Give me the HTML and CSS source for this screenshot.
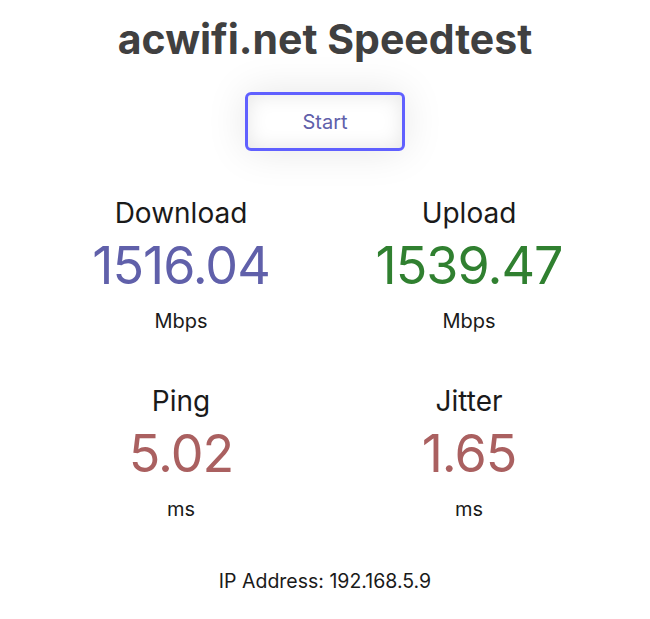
FILE: index.html
```html
<!DOCTYPE html>
<html lang="en">
<head>
    <meta charset="UTF-8">
    <meta name="viewport" content="width=device-width, initial-scale=1.0">

    <!-- Title -->
    <title>acwifi.net Speedtest</title>

    <!-- CSS styles -->
    <link rel="stylesheet" href="styles.css">
</head>
<body>
    <!-- Header -->
    <h1 class="title">acwifi.net Speedtest</h1>

    <!-- Start button -->
    <div class="start-btn">Start</div>

    <!-- Test results -->
    <div class="results">
        <div class="test-area">
            <div class="test-name">Download</div>
            <div class="meter-text dl">1516.04</div>
            <div class="unit">Mbps</div>
        </div>
        <div class="test-area">
            <div class="test-name">Upload</div>
            <div class="meter-text ul">1539.47</div>
            <div class="unit">Mbps</div>
        </div>
        <div class="test-area">
            <div class="test-name">Ping</div>
            <div class="meter-text ping">5.02</div>
            <div class="unit">ms</div>
        </div>
        <div class="test-area">
            <div class="test-name">Jitter</div>
            <div class="meter-text ping">1.65</div>
            <div class="unit">ms</div>
        </div>
    </div>

    <!-- IP address -->
    <div class="ip-area">IP Address: 192.168.5.9</div>
</body>
</html>
```

FILE: styles.css
```css
body {
    font-family: 'Inter', 'Noto Sans', sans-serif;
    font-size: 20px;
    background-color: #fff;
    color: #1a1a1a;
    margin: 0;
    padding: 0;
    text-align: center;
}

.title {
    color: #404040;
    font-size: 41px;
    font-weight: bold;
    line-height: 52px;
    margin: 13px 0 0;
}

.start-btn {
    display: flex;
    align-items: center;
    justify-content: center;
    width: 160px;
    height: 59px;
    margin: 27px auto 0;
    box-sizing: border-box;
    color: #6060AA;
    border: 3px solid #6060FF;
    border-radius: 6px;
    cursor: pointer;
    box-shadow: 0 0 2em rgba(0, 0, 0, 0.1), inset 0 0 1em rgba(0, 0, 0, 0.1);
}

.results {
    display: grid;
    grid-template-columns: 288px 288px;
    justify-content: center;
    row-gap: 51px;
    margin-top: 45px;
}

.test-name {
    font-size: 28px;
    line-height: 34px;
}

.meter-text {
    font-size: 52px;
    line-height: 62px;
    letter-spacing: -1px;
    margin-top: 5px;
}

.dl {
    color: #6060AA;
}

.ul {
    color: #308030;
}

.ping {
    color: #AA6060;
}

.unit {
    line-height: 24px;
    margin-top: 12px;
}

.ip-area {
    font-size: 19.5px;
    line-height: 24px;
    margin-top: 48px;
}
```
